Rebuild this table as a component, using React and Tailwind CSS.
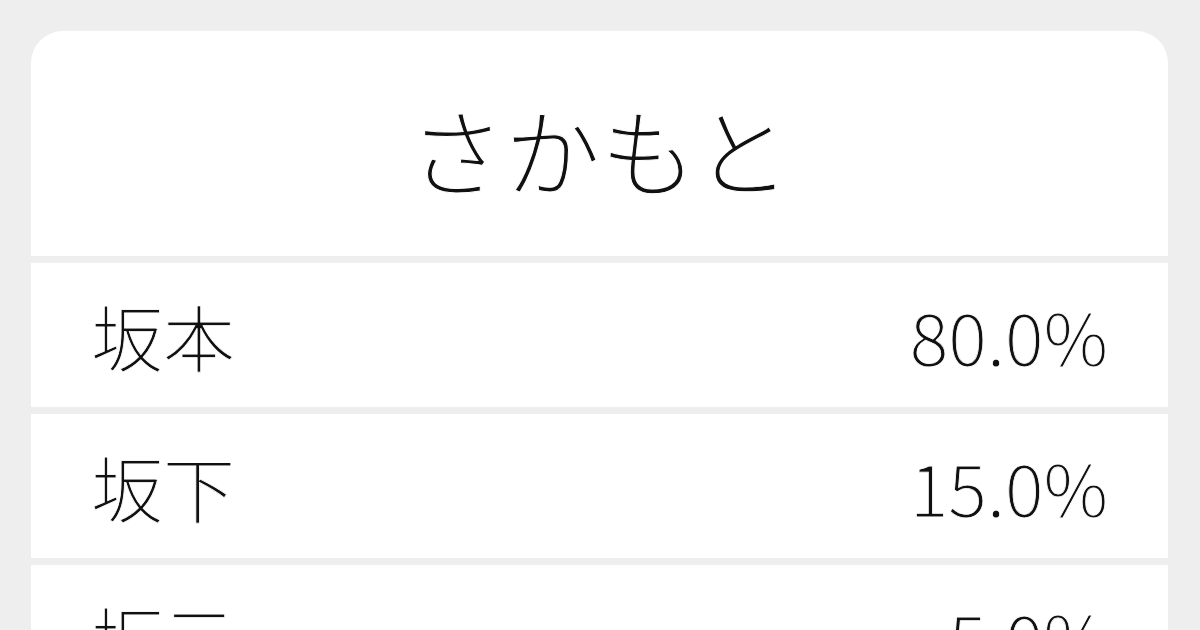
export default function App() {
  const rows = [
    ["坂本", "80.0%"],
    ["坂下", "15.0%"],
    ["坂元", "5.0%"],
  ];
  return (
    <div
      className="w-[1200px] h-[630px] overflow-hidden bg-[#eeeeee] pt-[31px] pl-[31px] pr-[32px]"
      style={{ fontFamily: '"Noto Sans CJK JP", "Noto Sans", sans-serif' }}
    >
      <div className="flex flex-col gap-[7px] rounded-t-[32px] overflow-hidden">
        <div className="bg-white h-[225px] flex items-center justify-center">
          <span className="text-[96px] font-light leading-none text-[#111111] mt-[8px] [-webkit-text-stroke:1px_#ffffff]">さかもと</span>
        </div>
        {rows.map(([k, v]) => (
          <div key={k} className="bg-white h-[144px] flex items-center justify-between px-[60px] shrink-0">
            <span className="text-[72px] font-light leading-none text-[#111111] [-webkit-text-stroke:0.8px_#ffffff]">{k}</span>
            <span className="text-[72px] font-light leading-none text-[#111111] [-webkit-text-stroke:0.8px_#ffffff]">{v}</span>
          </div>
        ))}
      </div>
    </div>
  );
}
